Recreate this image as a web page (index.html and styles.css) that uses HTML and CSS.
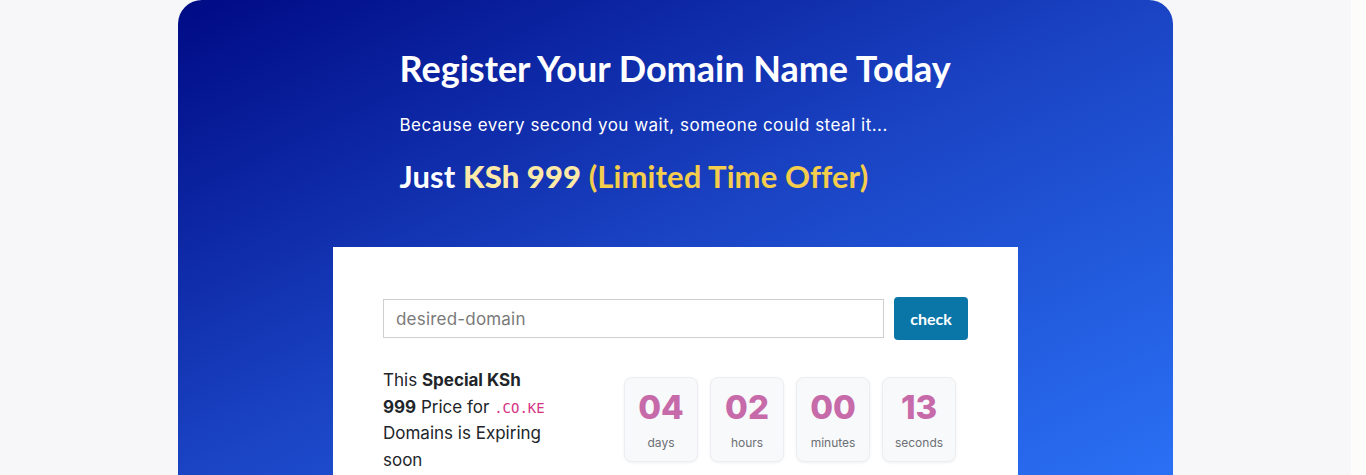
FILE: index.html
```html
<!DOCTYPE html>
<html lang="en">
<head>
<meta charset="utf-8">
<title>Register Your Domain</title>
<link rel="stylesheet" href="styles.css">
</head>
<body>
<main class="page">
  <section class="hero">
    <div class="hero-text">
      <h1 class="title">Register Your Domain Name Today</h1>
      <p class="subtitle">Because every second you wait, someone could steal it...</p>
      <p class="price">Just <strong class="amount">KSh 999</strong> <span class="offer">(Limited Time Offer)</span></p>
    </div>
    <div class="card">
      <form class="search">
        <input class="search-input" type="text" placeholder="desired-domain">
        <button class="search-btn" type="button">check</button>
      </form>
      <div class="promo">
        <p class="promo-text">This <strong>Special KSh</strong> <strong>999</strong> Price for <code class="tld">.CO.KE</code> Domains is Expiring soon</p>
        <div class="countdown">
          <div class="unit"><span class="num">04</span><span class="label">days</span></div>
          <div class="unit"><span class="num">02</span><span class="label">hours</span></div>
          <div class="unit"><span class="num">00</span><span class="label">minutes</span></div>
          <div class="unit"><span class="num">13</span><span class="label">seconds</span></div>
        </div>
      </div>
    </div>
  </section>
</main>
</body>
</html>
```

FILE: styles.css
```css
html {
  background: #fdfcfb;
}
body {
  margin: 0 15px 0 0;
  background: #f7f7f9;
  font-family: "Inter", "Liberation Sans", sans-serif;
  height: 475px;
  overflow: hidden;
}
.page {
  display: flex;
  justify-content: center;
}
.hero {
  width: 995px;
  height: 475px;
  overflow: hidden;
  border-radius: 24px 24px 0 0;
  background: linear-gradient(to bottom right, #000a85 0%, #1a44c4 50%, #2a70f5 100%);
  display: flex;
  flex-direction: column;
  align-items: center;
}
.hero-text {
  width: 552px;
  padding-top: 44px;
  color: #fff;
}
.title {
  margin: 0;
  font-family: "Lato", sans-serif;
  font-weight: 700;
  font-size: 36px;
  line-height: 48px;
  letter-spacing: 0;
}
.subtitle {
  margin: 21px 0 0;
  font-size: 17px;
  letter-spacing: 0.5px;
  line-height: 24px;
}
.price {
  margin: 19px 0 0;
  font-family: "Lato", sans-serif;
  font-size: 31px;
  font-weight: 700;
  letter-spacing: 0.1px;
  line-height: 40px;
}
.amount {
  color: #fdeaa8;
}
.offer {
  color: #f5cd4c;
  font-weight: 700;
}
.card {
  margin-top: 51px;
  width: 685px;
  flex-shrink: 0;
  background: #fff;
  padding: 50px;
  box-sizing: border-box;
  height: 300px;
}
.search {
  display: flex;
  gap: 10px;
  align-items: center;
}
.search-input {
  flex: 1;
  height: 39px;
  box-sizing: border-box;
  border: 1px solid #cfcfcf;
  padding: 0 12px;
  font-family: "Inter", sans-serif;
  font-size: 17px;
  letter-spacing: 0.2px;
  color: #333;
}
.search-input::placeholder {
  color: #7a7a7a;
}
.search-btn {
  width: 74px;
  height: 43px;
  border: 0;
  border-radius: 4px;
  background: #0a76a8;
  color: #fff;
  font-family: "Lato", sans-serif;
  font-weight: 700;
  font-size: 16px;
}
.promo {
  display: flex;
  margin-top: 37px;
}
.promo-text {
  margin: -10px 0 0;
  width: 241px;
  padding-right: 69px;
  box-sizing: border-box;
  font-size: 17px;
  line-height: 26.5px;
  color: #212529;
}
.promo-text strong {
  font-weight: 700;
  line-height: 1;
}
.tld {
  font-family: "DejaVu Sans Mono", monospace;
  font-size: 14px;
  line-height: 1;
  color: #d63384;
}
.countdown {
  display: flex;
  gap: 12px;
}
.unit {
  width: 74px;
  height: 85px;
  box-sizing: border-box;
  border: 1px solid #eceef1;
  border-radius: 8px;
  background: #f8f9fb;
  box-shadow: 0 1px 3px rgba(0, 0, 0, 0.06);
  display: flex;
  flex-direction: column;
  align-items: center;
  padding-top: 11px;
}
.num {
  font-size: 33px;
  font-weight: 800;
  line-height: 36px;
  color: #c76aa9;
}
.label {
  margin-top: 10px;
  font-size: 12px;
  color: #6c6f73;
}
```
